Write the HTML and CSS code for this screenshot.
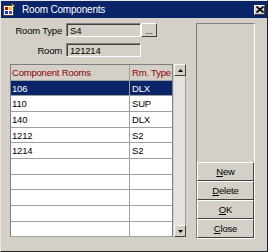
FILE: index.html
```html
<!DOCTYPE html>
<html lang="en">
  <head>
    <meta charset="UTF-8" />
    <title>Room Components</title>
    <link rel="stylesheet" href="styles.css">
  </head>
  <body>
    <div class="window">
      <div class="titlebar">
        <svg class="app-icon" width="13" height="13" viewBox="0 0 13 13">
          <rect x="0.5" y="2.5" width="10" height="10" fill="#fff" stroke="#404040" stroke-width="1"/>
          <rect x="2" y="4" width="3" height="3" fill="#c00000"/>
          <rect x="6" y="4" width="3" height="3" fill="#f0c000"/>
          <rect x="2" y="8" width="3" height="3" fill="#0040c0"/>
          <rect x="6" y="8" width="3" height="3" fill="#8030a0"/>
          <path d="M8 0 L12 3 L10 4 Z" fill="#f0c000"/>
        </svg>
        <span class="title">Room Components</span>
        <span class="close-btn">
          <svg width="8" height="7" viewBox="0 0 8 7">
            <path d="M0.5 0.5 L7.5 6.5 M7.5 0.5 L0.5 6.5" stroke="#000" stroke-width="1.6"/>
          </svg>
        </span>
      </div>

      <div class="content">
        <div class="main">
          <div class="field">
            <label>Room Type</label>
            <div class="input">S4</div>
            <div class="lookup">...</div>
          </div>
          <div class="field">
            <label>Room</label>
            <div class="input">121214</div>
          </div>

          <div class="grid-wrap">
            <div class="grid" id="grid">
              <div class="row head">
                <div class="cell c1">Component Rooms</div>
                <div class="cell c2">Rm. Type</div>
              </div>
            </div>
            <div class="scrollbar">
              <div class="arrow">
                <svg width="5" height="3" viewBox="0 0 5 3"><path d="M2.5 0 L5 3 L0 3 Z" fill="#000"/></svg>
              </div>
              <div class="track"></div>
              <div class="arrow">
                <svg width="5" height="3" viewBox="0 0 5 3"><path d="M0 0 L5 0 L2.5 3 Z" fill="#000"/></svg>
              </div>
            </div>
          </div>
        </div>

        <div class="side">
          <div class="buttons">
            <div class="btn"><u>N</u>ew</div>
            <div class="btn"><u>D</u>elete</div>
            <div class="btn"><u>O</u>K</div>
            <div class="btn"><u>C</u>lose</div>
          </div>
        </div>
      </div>
    </div>

    <script>
      const rooms = [
        ["106", "DLX"],
        ["110", "SUP"],
        ["140", "DLX"],
        ["1212", "S2"],
        ["1214", "S2"],
        ["", ""],
        ["", ""],
        ["", ""],
        ["", ""],
        ["", ""],
      ];

      const grid = document.getElementById("grid");
      rooms.forEach(([room, type], i) => {
        const row = document.createElement("div");
        row.className = i === 0 ? "row selected" : "row";
        row.innerHTML = `<div class="cell c1">${room}</div><div class="cell c2">${type}</div>`;
        grid.appendChild(row);
      });
    </script>
  </body>
</html>
```

FILE: styles.css
```css
body {
  margin: 0;
  font-family: "Liberation Sans", Arial, sans-serif;
  font-size: 9.5px;
  letter-spacing: -0.2px;
  color: #000;
  background: #d4d0c8;
}
.window {
  width: 268px;
  height: 252px;
  box-sizing: border-box;
  background: #d4d0c8;
  border: 1px solid;
  border-color: #e8e6e2 #202020 #202020 #e8e6e2;
  display: flex;
  flex-direction: column;
}
.titlebar {
  height: 17px;
  background: #0a246a;
  display: flex;
  align-items: center;
  padding: 0 2px 0 2px;
}
.app-icon {
  margin-right: 6px;
}
.title {
  color: #fff;
  font-size: 10px;
  flex: 1;
}
.close-btn {
  width: 11px;
  height: 10px;
  box-sizing: border-box;
  background: #d4d0c8;
  border: 1px solid;
  border-color: #fff #404040 #404040 #fff;
  display: flex;
  align-items: center;
  justify-content: center;
}
.content {
  flex: 1;
  display: flex;
  padding: 5px 11px 0 9px;
}
.main {
  width: 178px;
  display: flex;
  flex-direction: column;
}
.field {
  display: flex;
  align-items: center;
  height: 14px;
  margin-bottom: 6px;
}
.field label {
  width: 56px;
  padding-right: 4px;
  box-sizing: border-box;
  text-align: right;
}
.input {
  width: 75px;
  height: 14px;
  box-sizing: border-box;
  border: 1px solid;
  border-color: #808080 #fff #fff #808080;
  box-shadow: inset 1px 1px 0 #404040;
  padding: 1px 0 0 3px;
  line-height: 11px;
}
.lookup {
  width: 16px;
  height: 14px;
  box-sizing: border-box;
  border: 1px solid;
  border-color: #fff #404040 #404040 #fff;
  text-align: center;
  line-height: 14px;
  font-size: 9px;
}
.grid-wrap {
  display: flex;
  margin-top: 1px;
}
.grid {
  width: 163px;
  height: 173px;
  box-sizing: border-box;
  background: #fff;
  border-left: 1px solid #808080;
  border-top: 1px solid #808080;
  border-right: 1px solid #808080;
}
.row {
  display: flex;
  height: 15.67px;
  box-sizing: border-box;
  border-bottom: 1px solid #a0a0a0;
}
.row.head {
  background: #d4d0c8;
  color: #8b0000;
}
.row.selected {
  background: #0a246a;
  color: #fff;
}
.cell {
  padding-left: 1px;
  line-height: 15px;
  white-space: nowrap;
  overflow: hidden;
}
.c1 {
  width: 117px;
  border-right: 1px solid #a0a0a0;
}
.c2 {
  flex: 1;
  padding-left: 2px;
}
.scrollbar {
  width: 12px;
  height: 173px;
  margin-left: 1px;
  display: flex;
  flex-direction: column;
  background: #e4e2de;
}
.arrow {
  height: 12px;
  box-sizing: border-box;
  background: #d4d0c8;
  border: 1px solid;
  border-color: #fff #404040 #404040 #fff;
  display: flex;
  align-items: center;
  justify-content: center;
}
.track {
  flex: 1;
  border-right: 1px solid #a0a0a0;
}
.side {
  margin-left: 8px;
  width: 59px;
  height: 216px;
  box-sizing: border-box;
  border: 1px solid;
  border-color: #808080 #fff #fff #808080;
  display: flex;
  flex-direction: column;
  justify-content: flex-end;
}
.buttons {
  display: flex;
  flex-direction: column;
}
.btn {
  height: 19px;
  box-sizing: border-box;
  border: 1px solid;
  border-color: #fff #404040 #404040 #fff;
  text-align: center;
  line-height: 17px;
}
```
